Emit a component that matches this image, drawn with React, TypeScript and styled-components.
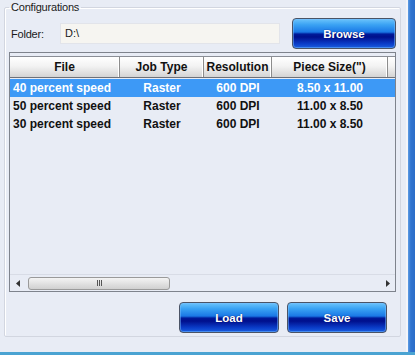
import React from 'react';
import styled, {createGlobalStyle} from 'styled-components';

const GlobalStyle = createGlobalStyle`
  html, body {
    margin: 0;
    padding: 0;
    background: #e8ecf5;
  }
`;

type Row = { file: string; jobType: string; resolution: string; size: string };

const rows: Row[] = [
    {file: '40 percent speed', jobType: 'Raster', resolution: '600 DPI', size: '8.50 x 11.00'},
    {file: '50 percent speed', jobType: 'Raster', resolution: '600 DPI', size: '11.00 x 8.50'},
    {file: '30 percent speed', jobType: 'Raster', resolution: '600 DPI', size: '11.00 x 8.50'},
];

const columns = '110px 84px 68px 116px 1fr';

const App = () => {
    return (
        <>
            <GlobalStyle/>
            <Window>
                <Body>
                    <Group>
                        <Legend>Configurations</Legend>
                        <FolderRow>
                            <Label>Folder:</Label>
                            <PathBox>D:\</PathBox>
                            <BlueButton $width={104}>Browse</BlueButton>
                        </FolderRow>
                        <Table>
                            <HeaderRow>
                                <HeaderCell>File</HeaderCell>
                                <HeaderCell>Job Type</HeaderCell>
                                <HeaderCell>Resolution</HeaderCell>
                                <HeaderCell>Piece Size(")</HeaderCell>
                                <HeaderCell $last/>
                            </HeaderRow>
                            <Rows>
                                {rows.map((r, i) => (
                                    <DataRow key={r.file} $selected={i === 0}>
                                        <Cell $left>{r.file}</Cell>
                                        <Cell>{r.jobType}</Cell>
                                        <Cell>{r.resolution}</Cell>
                                        <Cell>{r.size}</Cell>
                                        <Cell/>
                                    </DataRow>
                                ))}
                            </Rows>
                            <HScroll>
                                <Arrow>
                                    <svg width="5" height="7" viewBox="0 0 5 7"><path d="M4 0 L0 3.5 L4 7 Z" fill="#333"/></svg>
                                </Arrow>
                                <Track>
                                    <Thumb>
                                        <Grip><span/><span/><span/></Grip>
                                    </Thumb>
                                </Track>
                                <Arrow>
                                    <svg width="5" height="7" viewBox="0 0 5 7"><path d="M1 0 L5 3.5 L1 7 Z" fill="#333"/></svg>
                                </Arrow>
                            </HScroll>
                        </Table>
                        <Actions>
                            <BlueButton $width={100}>Load</BlueButton>
                            <BlueButton $width={100}>Save</BlueButton>
                        </Actions>
                    </Group>
                </Body>
                <SideFrame/>
            </Window>
            <BottomFrame/>
        </>
    );
};

export default App;

const Window = styled.div`
  display: flex;
  width: 415px;
  height: 352px;
`;

const Body = styled.div`
  flex: 1;
  padding: 1px 5px 0 4px;
  background: #e8ecf5;
  border-right: 2px solid #f3f5fa;
`;

const SideFrame = styled.div`
  width: 10px;
  background: linear-gradient(to right, #5d9ce4, #2f73cf 40%, #2a6cc8);
`;

const BottomFrame = styled.div`
  width: 415px;
  height: 3px;
  background: #4aa3d2;
`;

const Group = styled.fieldset`
  margin: 0;
  height: 336px;
  box-sizing: border-box;
  padding: 0 4px 0 4px;
  border: 1px solid #d2d6e0;
  box-shadow: inset 1px 1px 0 #ffffff;
  border-radius: 2px;
  font-family: "Liberation Sans", Arial, sans-serif;
`;

const Legend = styled.legend`
  margin-left: 0;
  padding: 0 2px;
  font-size: 11px;
  color: #1a1a1a;
  letter-spacing: -0.2px;
`;

const FolderRow = styled.div`
  display: flex;
  align-items: center;
  height: 33px;
  margin-top: 4px;
`;

const Label = styled.span`
  width: 49px;
  padding-left: 2px;
  font-size: 11px;
  letter-spacing: -0.2px;
  color: #1a1a1a;
`;

const PathBox = styled.div`
  width: 214px;
  height: 19px;
  line-height: 19px;
  padding-left: 4px;
  margin-right: 12px;
  background: #f6f5f1;
  border: 1px solid #e2e4ea;
  font-size: 11px;
  color: #1a1a1a;
`;

const BlueButton = styled.button<{ $width: number }>`
  width: ${p => p.$width}px;
  height: 31px;
  padding: 0;
  border: 1px solid #4b5466;
  border-radius: 4px;
  background: linear-gradient(to bottom,
    #6cc4fb 0%, #3aa2f3 20%, #1a78e6 45%, #001a9a 52%, #000f8c 62%, #0a3cc8 85%, #1a5ee0 100%);
  box-shadow: inset 0 0 0 1px rgba(120, 190, 255, 0.5);
  color: #ffffff;
  font-family: "Liberation Sans", Arial, sans-serif;
  font-weight: bold;
  font-size: 11.5px;
  text-shadow: 0 0 1px #001060;
  cursor: pointer;
`;

const Table = styled.div`
  display: flex;
  flex-direction: column;
  height: 240px;
  box-sizing: border-box;
  margin-top: 2px;
  padding-top: 3px;
  border: 1px solid #7e838c;
  background: #e8ecf5;
`;

const HeaderRow = styled.div`
  display: grid;
  grid-template-columns: ${columns};
  height: 20px;
  border-top: 1px solid #8a8e96;
  border-bottom: 1px solid #6d7179;
  background: linear-gradient(to bottom, #ffffff 0%, #f3f3f3 45%, #d4d4d4 100%);
`;

const HeaderCell = styled.div<{ $last?: boolean }>`
  display: flex;
  align-items: center;
  justify-content: center;
  border-right: ${p => (p.$last ? 'none' : '1px solid #8c8c8c')};
  box-shadow: ${p => (p.$last ? 'none' : 'inset -1px 0 0 #ffffff')};
  font-size: 12px;
  font-weight: bold;
  color: #111;
`;

const Rows = styled.div`
  flex: 1;
  padding-top: 1px;
`;

const DataRow = styled.div<{ $selected?: boolean }>`
  display: grid;
  grid-template-columns: ${columns};
  height: 18px;
  background: ${p => (p.$selected ? '#3d99f6' : 'transparent')};
  color: ${p => (p.$selected ? '#ffffff' : '#111111')};
  font-size: 12px;
  font-weight: bold;
`;

const Cell = styled.div<{ $left?: boolean }>`
  display: flex;
  align-items: center;
  justify-content: ${p => (p.$left ? 'flex-start' : 'center')};
  padding-left: ${p => (p.$left ? '3px' : '0')};
  white-space: nowrap;
`;

const HScroll = styled.div`
  display: flex;
  align-items: center;
  height: 16px;
  border-top: 1px solid #d8dce6;
`;

const Arrow = styled.div`
  display: flex;
  align-items: center;
  justify-content: center;
  width: 16px;
  height: 16px;
`;

const Track = styled.div`
  flex: 1;
  height: 15px;
  display: flex;
  align-items: center;
`;

const Thumb = styled.div`
  width: 142px;
  height: 13px;
  margin-left: 2px;
  box-sizing: border-box;
  border: 1px solid #9a9a9a;
  border-radius: 3px;
  background: linear-gradient(to bottom, #f4f4f4, #e2e2e2 50%, #d0d0d0);
  display: flex;
  align-items: center;
  justify-content: center;
`;

const Grip = styled.div`
  display: flex;
  gap: 1px;

  span {
    width: 1px;
    height: 6px;
    background: #555;
  }
`;

const Actions = styled.div`
  display: flex;
  justify-content: flex-end;
  gap: 8px;
  margin-top: 10px;
  padding-right: 9px;
`;
